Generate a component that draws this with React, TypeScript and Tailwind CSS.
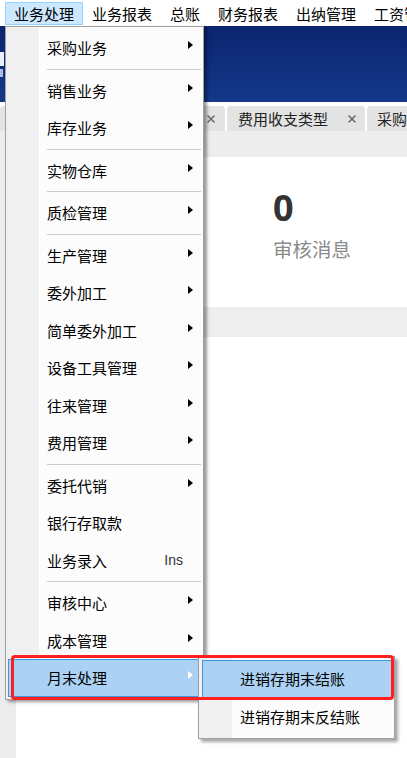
import { X } from "lucide-react";

type Entry = { label: string; arrow?: boolean; hint?: string } | "sep";

const menuEntries: Entry[] = [
  { label: "采购业务", arrow: true },
  "sep",
  { label: "销售业务", arrow: true },
  { label: "库存业务", arrow: true },
  "sep",
  { label: "实物仓库", arrow: true },
  "sep",
  { label: "质检管理", arrow: true },
  "sep",
  { label: "生产管理", arrow: true },
  { label: "委外加工", arrow: true },
  { label: "简单委外加工", arrow: true },
  { label: "设备工具管理", arrow: true },
  { label: "往来管理", arrow: true },
  { label: "费用管理", arrow: true },
  "sep",
  { label: "委托代销", arrow: true },
  { label: "银行存取款" },
  { label: "业务录入", hint: "Ins" },
  "sep",
  { label: "审核中心", arrow: true },
  { label: "成本管理", arrow: true },
];

const topMenus = ["业务处理", "业务报表", "总账", "财务报表", "出纳管理", "工资管理"];

function Arrow({ white }: { white?: boolean }) {
  return (
    <svg width="5" height="8" viewBox="0 0 5 8" className="mb-[5px]">
      <path d="M0 0 L5 4 L0 8 Z" fill={white ? "#ffffff" : "#000000"} />
    </svg>
  );
}

function MenuBar() {
  return (
    <div className="flex h-[26px] items-start bg-white pl-[5px] pt-[2px]">
      {topMenus.map((m, i) => (
        <div
          key={m}
          className={`flex h-[23px] shrink-0 items-center whitespace-nowrap border px-[8px] text-[15px] leading-none text-black ${
            i === 0 ? "border-[#99d1ff] bg-[#cce8ff]" : "border-transparent"
          }`}
        >
          {m}
        </div>
      ))}
    </div>
  );
}

function TabBar() {
  return (
    <div className="flex h-[29px] items-end gap-[2px] overflow-hidden bg-white">
      <div className="flex h-[25px] w-[225px] shrink-0 items-center justify-end rounded-t-[4px] bg-[#e3e3e3] pr-[8px]">
        <X size={12} strokeWidth={3.2} className="text-[#6b6b6b]" />
      </div>
      <div className="flex h-[25px] w-[138px] shrink-0 items-center justify-between rounded-t-[4px] bg-[#e3e3e3] pl-[11px] pr-[7px]">
        <span className="text-[15px] leading-none text-[#222]">费用收支类型</span>
        <X size={12} strokeWidth={3.2} className="text-[#6b6b6b]" />
      </div>
      <div className="flex h-[25px] w-[80px] shrink-0 items-center rounded-t-[4px] bg-[#e3e3e3] pl-[10px]">
        <span className="whitespace-nowrap text-[15px] leading-none text-[#222]">采购订单</span>
      </div>
    </div>
  );
}

function DropMenu() {
  return (
    <div className="absolute left-[5px] top-[26px] w-[199px] border border-[#a0a0a0] bg-[linear-gradient(to_right,#f0f0f0_33px,#fcfcfc_33px)] py-[2px] shadow-[3px_2px_3px_rgba(0,0,0,0.4)]">
      {menuEntries.map((e, i) =>
        e === "sep" ? (
          <div key={i} className="flex h-[5px] items-center pl-[41px] pr-[2px]">
            <div className="h-px w-full bg-[#cbcbcb]" />
          </div>
        ) : (
          <div
            key={i}
            className="flex h-[37.5px] items-center justify-between pl-[41px] pr-[10px] text-[15px] leading-none text-black"
          >
            <span>{e.label}</span>
            {e.arrow && <Arrow />}
            {e.hint && <span className="mr-[10px] font-['Liberation_Sans',sans-serif] text-[14px] text-[#333]">{e.hint}</span>}
          </div>
        )
      )}
      <div className="ml-[2px] mr-[1px] flex h-[37.5px] items-center justify-between border border-[#3f95de] bg-[#abd2f4] pl-[38px] pr-[8px] text-[15px] leading-none text-black">
        <span>月末处理</span>
        <Arrow white />
      </div>
    </div>
  );
}

function SubMenu() {
  return (
    <div className="absolute left-[198px] top-[656px] w-[197px] border border-[#a0a0a0] bg-[linear-gradient(to_right,#f0f0f0_33px,#fcfcfc_33px)] py-[3px] shadow-[3px_3px_3px_rgba(0,0,0,0.35)]">
      <div className="ml-[3px] mr-[1px] flex h-[37.5px] items-center border border-[#3f95de] bg-[#abd2f4] pl-[37px] text-[15px] leading-none text-black">
        进销存期末结账
      </div>
      <div className="flex h-[37.5px] items-center pl-[41px] text-[15px] leading-none text-black">
        进销存期末反结账
      </div>
    </div>
  );
}

export default function App() {
  return (
    <div className="relative h-[758px] w-[407px] overflow-hidden bg-white font-['Noto_Sans_CJK_SC','Noto_Sans',sans-serif]">
      <MenuBar />
      {/* banner */}
      <div className="flex h-[76px] items-center bg-[linear-gradient(180deg,#0a246f,#15388a)]">
        <div className="ml-0 flex flex-col gap-[3px]">
          <div className="h-[14px] w-[4px] bg-[#e8eefc]" />
          <div className="h-[8px] w-[3px] bg-[#aebde6]" />
        </div>
      </div>
      <TabBar />
      <div className="h-[26px] bg-[#ededed]" />
      <div className="flex">
        <div className="w-[16px] shrink-0 bg-[#ececec]" />
        <div className="flex-1">
          <div className="h-[150px] bg-white pl-[257px] pt-[33px]">
            <div className="font-['Noto_Sans',sans-serif] text-[36px] font-bold leading-none text-[#333]">0</div>
            <div className="mt-[13px] text-[19.5px] leading-none text-[#8a8a8a]">审核消息</div>
          </div>
          <div className="h-[30px] bg-[#eeeeee]" />
          <div className="h-[425px] bg-white" />
        </div>
      </div>
      <DropMenu />
      <SubMenu />
      {/* annotation */}
      <div className="absolute left-[11px] top-[655px] h-[45px] w-[383px] rounded-[4px] border-[3px] border-[#ff1f1f]" />
    </div>
  );
}
